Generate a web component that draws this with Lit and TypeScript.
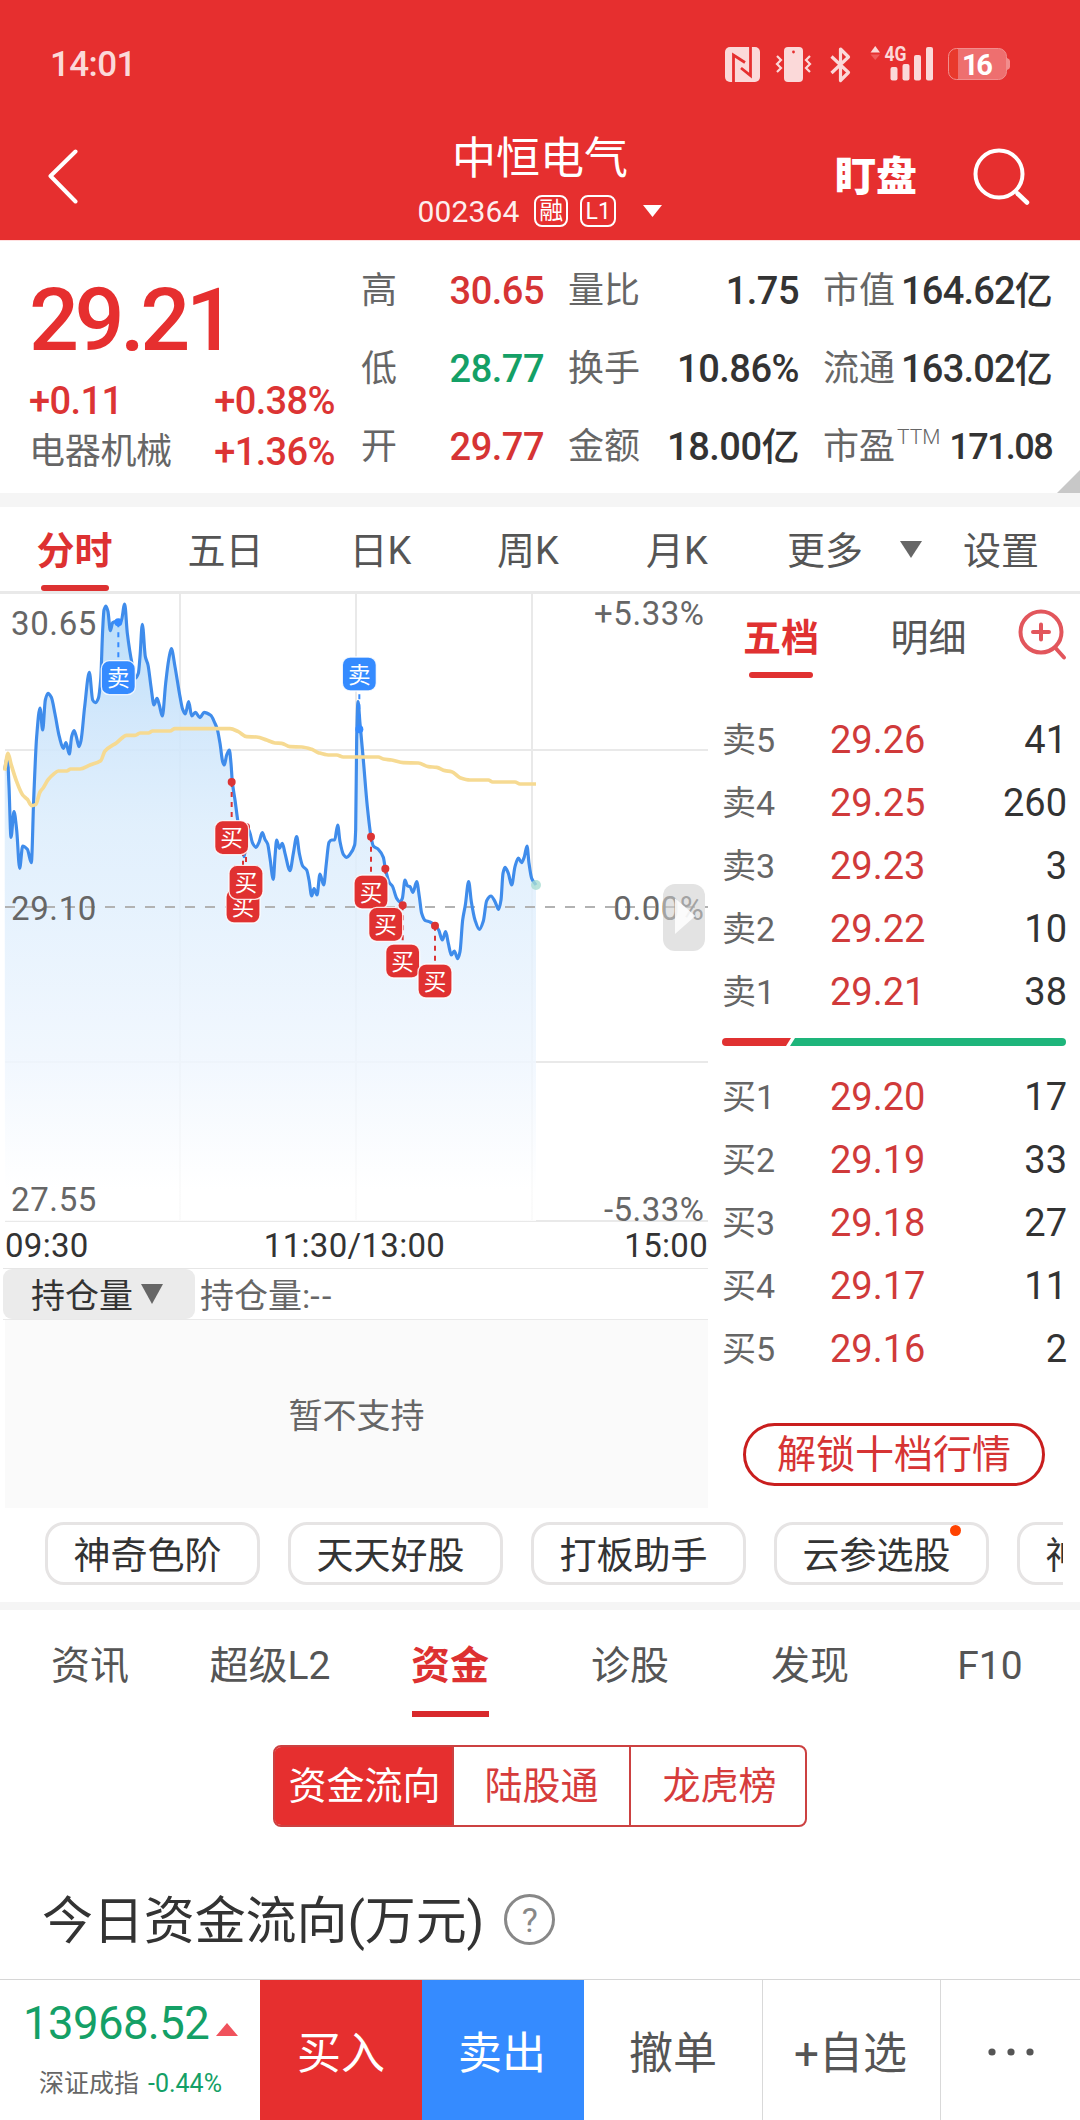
import { LitElement, html, svg, css } from "lit";
import { customElement, property } from "lit/decorators.js";
import { classMap } from "lit/directives/class-map.js";

const RED = "#e62f2f";
const BLUE = "#358bff";

type Pt = [number, number];

/* Chart space: one unit is a third of a pixel. */
const PRICE: Pt[] = [
  [14, 540], [22, 500], [27, 590], [33, 742], [42, 665], [50, 720], [59, 835], [68, 768], [82, 778], [94, 818],
  [101, 630], [110, 440], [120, 354], [128, 420], [136, 330], [144, 310], [154, 322], [165, 372], [178, 440],
  [190, 475], [198, 458], [208, 492], [215, 440], [222, 422], [229, 440], [237, 470], [243, 452], [254, 350],
  [268, 247], [278, 330], [286, 338], [295, 325], [302, 270], [308, 120], [312, 60], [318, 48], [324, 65],
  [331, 122], [338, 98], [348, 95], [356, 98], [364, 92], [374, 42], [382, 130], [396, 220], [407, 264],
  [415, 250], [420, 200], [427, 103], [436, 200], [444, 225], [453, 290], [462, 345], [471, 325], [478, 345],
  [487, 378], [497, 280], [506, 210], [514, 176], [525, 230], [540, 320], [548, 358], [556, 372], [566, 335],
  [575, 378], [586, 367], [600, 383], [612, 367], [632, 376], [645, 400], [652, 418], [660, 460], [668, 515],
  [673, 525], [680, 495], [688, 480], [693, 520], [697, 576], [705, 630], [713, 690], [725, 760], [732, 800],
  [742, 712], [750, 730], [758, 760], [768, 772], [777, 757], [787, 728], [795, 748], [803, 762], [810, 805],
  [820, 868], [825, 800], [830, 750], [838, 775], [847, 760], [855, 790], [870, 842], [880, 790], [890, 740],
  [898, 790], [908, 828], [920, 840], [927, 870], [935, 918], [942, 896], [951, 915], [960, 852], [971, 885],
  [979, 820], [987, 757], [995, 750], [1004, 750], [1013, 705], [1020, 755], [1030, 793], [1040, 802],
  [1050, 793], [1064, 765], [1067, 720], [1070, 450], [1074, 335], [1080, 400], [1090, 510], [1102, 650],
  [1113, 740], [1120, 768], [1135, 778], [1150, 802], [1156, 836], [1168, 878], [1177, 888], [1190, 925],
  [1200, 936], [1207, 925], [1215, 870], [1222, 887], [1230, 890], [1239, 907], [1250, 875], [1258, 920],
  [1265, 970], [1275, 991], [1290, 996], [1305, 1006], [1316, 1020], [1327, 1050], [1337, 1025], [1345, 1060],
  [1354, 1095], [1363, 1083], [1373, 1106], [1380, 1085], [1388, 990], [1396, 945], [1406, 875], [1414, 935],
  [1425, 990], [1438, 1018], [1450, 993], [1460, 932], [1473, 918], [1485, 935], [1496, 958], [1503, 930],
  [1509, 850], [1515, 832], [1525, 850], [1535, 885], [1545, 830], [1555, 804], [1565, 818], [1573, 800],
  [1581, 768], [1587, 820], [1595, 865], [1608, 885],
];

const AVERAGE: Pt[] = [
  [14, 542], [24, 490], [33, 522], [50, 575], [68, 615], [82, 628], [95, 647], [107, 644], [120, 606], [130, 593],
  [145, 568], [160, 553], [175, 543], [200, 543], [212, 537], [240, 537], [270, 525], [302, 512], [315, 483],
  [350, 458], [380, 436], [405, 436], [420, 429], [445, 429], [458, 423], [510, 423], [525, 416], [690, 416],
  [715, 425], [740, 440], [770, 441], [800, 450], [825, 459], [845, 460], [870, 470], [905, 471], [935, 478],
  [955, 488], [985, 495], [1010, 495], [1030, 501], [1135, 501], [1150, 507], [1175, 510], [1210, 518],
  [1255, 519], [1285, 530], [1310, 532], [1335, 542], [1355, 545], [1380, 563], [1410, 570], [1465, 570],
  [1478, 576], [1545, 576], [1560, 582], [1608, 582],
];

/** Cubic path through the points, flat at each local peak and trough. */
function smooth(points: Pt[]): string {
  const slope = points.slice(1).map((p, i) => (p[1] - points[i][1]) / (p[0] - points[i][0]));
  const tangent = points.map((_, i) => {
    if (i === 0) return slope[0];
    if (i === points.length - 1) return slope[i - 1];
    const a = slope[i - 1];
    const b = slope[i];
    return a * b <= 0 ? 0 : (2 * a * b) / (a + b);
  });
  let d = `M${points[0][0]} ${points[0][1]}`;
  for (let i = 1; i < points.length; i++) {
    const [x0, y0] = points[i - 1];
    const [x1, y1] = points[i];
    const h = (x1 - x0) / 3;
    d += `C${x0 + h} ${(y0 + tangent[i - 1] * h).toFixed(1)} ${x1 - h} ${(y1 - tangent[i] * h).toFixed(1)} ${x1} ${y1}`;
  }
  return d;
}

interface Trade { side: "买" | "卖"; x: number; y: number; dotX: number; dotY: number; }

const TRADES: Trade[] = [
  { side: "卖", x: 355, y: 263, dotX: 355, dotY: 97 },
  { side: "买", x: 729, y: 948, dotX: 729, dotY: 782 },
  { side: "买", x: 738, y: 877, dotX: 738, dotY: 711 },
  { side: "买", x: 695, y: 743, dotX: 695, dotY: 576 },
  { side: "卖", x: 1078, y: 252, dotX: 1078, dotY: 418 },
  { side: "买", x: 1113, y: 906, dotX: 1113, dotY: 740 },
  { side: "买", x: 1157, y: 1003, dotX: 1156, dotY: 836 },
  { side: "买", x: 1208, y: 1113, dotX: 1208, dotY: 946 },
  { side: "买", x: 1305, y: 1173, dotX: 1305, dotY: 1007 },
];

const base = css`
  :host {
    display: block;
    box-sizing: border-box;
    font-family: Roboto, "Noto Sans CJK SC", sans-serif;
    line-height: 1;
  }
  *, *::before, *::after { box-sizing: border-box; }
  svg { display: block; flex: none; }
`;

@customElement("status-bar")
export class StatusBar extends LitElement {
  static styles = [base, css`
    .bar { display: flex; align-items: center; height: 96px; padding: 32px 69px 0 50px; color: #fbd9d9; }
    .time { flex: 1; font-size: 35px; font-weight: 500; letter-spacing: -0.6px; padding-top: 1px; }
    .g { font: 700 20px Roboto, sans-serif; }
    .level { font: 700 29px Roboto, sans-serif; }
  `];
  render() {
    return html`<div class="bar">
      <span class="time">14:01</span>
      <svg width="287" height="38" viewBox="724 45 287 38">
        <rect x="725" y="47" width="35" height="35" rx="5" fill="#fbd9d9" />
        <path d="M733.5 82V55L745 62.500M750.500 47V75.500L741 68" fill="none" stroke=${RED} stroke-width="2.800" />
        <rect x="784" y="47" width="19" height="35" rx="4" fill="#fbd9d9" />
        <circle cx="793.500" cy="52" r="1.400" fill=${RED} />
        <path d="M777 56l4 4-4 4 4 4-4 4M810 56l-4 4 4 4-4 4 4 4" fill="none" stroke="#fbd9d9" stroke-width="2.200" />
        <path d="M831.500 56.500l17 16-8 8V49l8 8-17 16" fill="none" stroke="#fbd9d9" stroke-width="3.200" stroke-linejoin="round" />
        <path d="M870.500 52.500h9.500l-4.750-6.500z" fill="#fbd9d9" />
        <path d="M870.500 54.500h9.500l-4.750 5.500z" fill="#f05a5a" />
        <text class="g" x="884.500" y="60.500" textLength="22" lengthAdjust="spacingAndGlyphs" fill="#fbd9d9">4G</text>
        <g fill="#fbd9d9">
          <rect x="890.500" y="67" width="7" height="13.500" rx="2" />
          <rect x="902.500" y="64" width="7" height="16.500" rx="2" />
          <rect x="914" y="55" width="7" height="25.500" rx="2" />
          <rect x="926" y="47" width="7" height="33.500" rx="2" />
        </g>
        <rect x="948.500" y="48.500" width="58" height="31" rx="8" fill="#ee6f6f" />
        <path d="M958 48.500h-2a7.500 7.500 0 0 0-7.500 7.500v16a7.500 7.500 0 0 0 7.500 7.500h2z" fill="#e8392c" />
        <rect x="948.500" y="48.500" width="58" height="31" rx="8" fill="none" stroke="#f28d8d" />
        <path d="M1007 58q3 1 3 3v6q0 2-3 3z" fill="#f28d8d" />
        <text class="level" x="962" y="75" textLength="31" fill="#fff">16</text>
      </svg>
    </div>`;
  }
}

@customElement("title-bar")
export class TitleBar extends LitElement {
  static styles = [base, css`
    .bar {
      display: grid; grid-template-columns: 360px 360px 1fr; align-items: start;
      height: 144px; padding-top: 37px; color: #fff;
    }
    .back { padding: 16px 0 0 47px; }
    .mid { display: flex; flex-direction: column; align-items: center; padding-top: 3px; }
    .name { font-size: 44px; line-height: 46px; }
    .sub { display: flex; align-items: center; height: 34px; margin-top: 12px; font-size: 30px; letter-spacing: 0.1px; }
    .code { opacity: 0.92; margin-right: 15px; padding-top: 1px; }
    .tag {
      display: flex; align-items: center; justify-content: center; height: 32px; min-width: 34px;
      border: 2px solid #fff; border-radius: 8px; font-size: 24px; margin-right: 12px;
    }
    .l1 { width: 36px; margin-right: 27px; font-size: 23px; padding-top: 1px; }
    .right { display: flex; align-items: center; justify-content: flex-end; gap: 55px; padding: 15px 50px 0 0; }
    .watch { font-size: 41px; font-weight: 900; padding-right: 1px; padding-top: 1px; }
  `];
  render() {
    return html`<div class="bar">
      <div class="back">
        <svg width="32" height="56" viewBox="0 0 32 56"><path d="M28.500 2.500L3.500 27l25 25.500" fill="none" stroke="#fff" stroke-width="4" stroke-linecap="round" stroke-linejoin="round" /></svg>
      </div>
      <div class="mid">
        <div class="name">中恒电气</div>
        <div class="sub">
          <span class="code">002364</span><span class="tag">融</span><span class="tag l1">L1</span>
          <svg width="19" height="12" viewBox="0 0 19 12"><path d="M0 0h19l-9.500 12z" fill="#fff" /></svg>
        </div>
      </div>
      <div class="right">
        <span class="watch">盯盘</span>
        <svg width="57" height="57" viewBox="0 0 57 57"><circle cx="26" cy="26" r="23.500" fill="none" stroke="#fff" stroke-width="4" /><path d="M44.500 45.500l9.500 9" stroke="#fff" stroke-width="4.500" stroke-linecap="round" /></svg>
      </div>
    </div>`;
  }
}

@customElement("quote-panel")
export class QuotePanel extends LitElement {
  static styles = [base, css`
    .panel {
      position: relative; display: grid; grid-template-columns: 361px 183px 255px 1fr;
      height: 253px; border-top: 1px solid #ffe0e0; background: #fff; color: #333;
    }
    .lead { padding: 34px 26px 0 29px; color: #dc3434; }
    .price { font-size: 88px; line-height: 90px; font-weight: 500; color: #e62f2f; letter-spacing: -4.4px; }
    .pair { display: flex; justify-content: space-between; align-items: center; height: 51px; font-size: 38px; font-weight: 500; letter-spacing: -0.6px; }
    .first { margin-top: 10px; }
    .sector { font-size: 36px; font-weight: 400; color: #666; letter-spacing: -0.3px; }
    .col { display: flex; flex-direction: column; padding-top: 11px; }
    .cell { display: flex; justify-content: space-between; align-items: center; height: 78px; font-size: 38px; font-weight: 500; letter-spacing: -0.5px; }
    .label { font-size: 36px; font-weight: 400; color: #666; letter-spacing: 0; white-space: nowrap; }
    .b { padding-left: 24px; }
    .c { padding: 11px 28px 0 24px; }
    .c .cell { letter-spacing: -0.8px; }
    .up { color: #d63434; }
    .down { color: #14a066; }
    .pe { display: flex; }
    .sup { font-size: 21px; font-weight: 300; margin: -2px 0 0 2px; }
    .c .tight { font-size: 36px; letter-spacing: -1.6px; }
    .corner { position: absolute; right: 0; bottom: 0; width: 23px; height: 23px; background: #c8c8c8; clip-path: polygon(100% 0, 100% 100%, 0 100%); }
  `];
  private cell(label: unknown, value: string, tone = "") {
    return html`<div class="cell"><span class="label">${label}</span><span class=${tone}>${value}</span></div>`;
  }
  render() {
    return html`<div class="panel">
      <div class="lead">
        <div class="price">29.21</div>
        <div class="pair first"><span>+0.11</span><span>+0.38%</span></div>
        <div class="pair"><span class="sector">电器机械</span><span>+1.36%</span></div>
      </div>
      <div class="col">${this.cell("高", "30.65", "up")}${this.cell("低", "28.77", "down")}${this.cell("开", "29.77", "up")}</div>
      <div class="col b">${this.cell("量比", "1.75")}${this.cell("换手", "10.86%")}${this.cell("金额", "18.00亿")}</div>
      <div class="col c">
        ${this.cell("市值", "164.62亿")}${this.cell("流通", "163.02亿")}
        ${this.cell(html`<span class="pe">市盈<span class="sup">TTM</span></span>`, "171.08", "tight")}
      </div>
      <div class="corner"></div>
    </div>`;
  }
}

@customElement("period-tabs")
export class PeriodTabs extends LitElement {
  static styles = [base, css`
    .tabs {
      display: grid; grid-template-columns: 149px 153px 157px 138px 160px 136px 34px 1fr;
      height: 87px; border-bottom: 3px solid #e9e9e9; background: #fff; color: #555; font-size: 38px;
    }
    .tab { display: flex; flex-direction: column; align-items: center; justify-content: flex-end; gap: 15px; }
    .tab::after { content: ""; width: 68px; height: 6px; border-radius: 3px; }
    .on { color: #dd3131; font-weight: 700; }
    .on::after { background: #dd3131; }
    .arrow { display: flex; align-items: center; padding: 0 0 0 7px; }
    .set { padding-right: 5px; }
  `];
  render() {
    return html`<div class="tabs">
      ${["分时", "五日", "日K", "周K", "月K", "更多"].map((t, i) => html`<div class=${classMap({ tab: true, on: i === 0 })}>${t}</div>`)}
      <div class="arrow"><svg width="22" height="17" viewBox="0 0 22 17"><path d="M0 0h22l-11 17z" fill="#666" /></svg></div>
      <div class="tab set">设置</div>
    </div>`;
  }
}

@customElement("minute-chart")
export class MinuteChart extends LitElement {
  static styles = [base, css`
    .t { font-family: Roboto, sans-serif; font-size: 99px; fill: #666; }
    .mark { font-family: "Noto Sans CJK SC", sans-serif; font-size: 68px; fill: #fff; }
    .times { display: flex; justify-content: space-between; align-items: center; height: 44px; padding: 0 0 1px 5px; font-size: 33px; color: #333; letter-spacing: 0.3px; }
    .mid { padding-right: 4px; }
    .legend { display: flex; align-items: stretch; height: 52px; margin: 0 0 0 3px; border-top: 1px solid #e6e6e6; border-bottom: 1px solid #e9e9e9; font-size: 34px; color: #666; }
    .pick { display: flex; align-items: center; gap: 8px; width: 192px; padding: 3px 0 0 28px; margin-right: 5px; border-radius: 9px; background: #ebebeb; color: #333; }
    .pick svg { margin-top: -4px; }
    .hold { display: flex; align-items: center; padding-top: 3px; }
    .dash { letter-spacing: 2.4px; }
    .empty { display: flex; align-items: center; justify-content: center; height: 188px; margin-left: 5px; padding-top: 3px; background: #fafafa; color: #666; font-size: 34px; }
  `];
  private link(t: Trade) {
    const edge = t.y > t.dotY ? t.y - 54 : t.y + 60;
    const color = t.side === "买" ? "#dc3434" : BLUE;
    return svg`<path d="M${t.dotX} ${t.dotY}V${edge}" stroke=${color} stroke-width="6" stroke-dasharray="15 15" />
      <circle cx=${t.dotX} cy=${t.dotY} r="12" fill=${color} />`;
  }
  private badge(t: Trade) {
    return svg`<rect x=${t.x - 51} y=${t.y - 51} width="102" height="102" rx="24" fill=${t.side === "买" ? "#e03131" : BLUE} stroke="#fff" stroke-opacity="0.85" stroke-width="4" />
      <text class="mark" text-anchor="middle" x=${t.x} y=${t.y + 26}>${t.side}</text>`;
  }
  render() {
    const line = smooth(PRICE);
    return html`
      <svg width="708" height="630" viewBox="0 12 2124 1890">
        <defs>
          <linearGradient id="fill" gradientUnits="userSpaceOnUse" x1="0" y1="40" x2="0" y2="1893">
            <stop offset="0" stop-color="#b2daf9" stop-opacity="0.92" />
            <stop offset="0.18" stop-color="#cde5fb" stop-opacity="0.9" />
            <stop offset="0.36" stop-color="#dcedfc" stop-opacity="0.85" />
            <stop offset="0.5" stop-color="#e2f0fd" stop-opacity="0.85" />
            <stop offset="0.74" stop-color="#eff6fe" stop-opacity="0.85" />
            <stop offset="0.95" stop-color="#ffffff" stop-opacity="0.8" />
          </linearGradient>
        </defs>
        <path d="M540 12V1893M1068 12V1893M1596 12V1893M15 480H2124M15 1416H2124M15 1893H2124" stroke="#e9e9e9" stroke-width="6" />
        <path d="${line}V1893H15Z" fill="url(#fill)" />
        <path d="M15 951H2124" stroke="#b2b2b2" stroke-width="6" stroke-dasharray="30 30" />
        <path d=${line} fill="none" stroke="#3f8ceb" stroke-width="9.500" stroke-linejoin="round" />
        <path d=${smooth(AVERAGE)} fill="none" stroke="#f6da92" stroke-width="11" stroke-linejoin="round" />
        <circle cx="1608" cy="885" r="15" fill="#a9dcd2" fill-opacity="0.8" />
        ${TRADES.map((t) => this.link(t))}
        ${TRADES.map((t) => this.badge(t))}
        <text class="t" x="33" y="134" textLength="256">30.65</text>
        <text class="t" x="33" y="990" textLength="256">29.10</text>
        <text class="t" x="33" y="1863" textLength="256">27.55</text>
        <text class="t" x="1782" y="104" textLength="330">+5.33%</text>
        <text class="t" x="1840" y="990" textLength="272">0.00%</text>
        <text class="t" x="1812" y="1892" textLength="300">-5.33%</text>
        <rect x="1989" y="882" width="126" height="201" rx="36" fill="#cfcfcf" fill-opacity="0.58" />
        <path d="M2025 925L2086 978L2025 1032Z" fill="#fff" fill-opacity="0.85" />
      </svg>
      <div class="times"><span>09:30</span><span class="mid">11:30/13:00</span><span>15:00</span></div>
      <div class="legend">
        <div class="pick">持仓量<svg width="22" height="20" viewBox="0 0 22 20"><path d="M0 0h22l-11 20z" fill="#666" /></svg></div>
        <div class="hold">持仓量:<span class="dash">--</span></div>
      </div>
      <div class="empty">暂不支持</div>`;
  }
}

@customElement("order-book")
export class OrderBook extends LitElement {
  static styles = [base, css`
    :host { padding: 12px 14px 0 14px; }
    .tabs { display: grid; grid-template-columns: 118px 177px 1fr; height: 75px; font-size: 38px; color: #555; margin-bottom: 27px; }
    .tab { display: flex; flex-direction: column; align-items: center; padding-top: 13px; gap: 15px; }
    .tab::after { content: ""; width: 64px; height: 6px; border-radius: 3px; }
    .on { color: #e03131; font-weight: 700; }
    .on::after { background: #e03131; }
    .more { display: flex; justify-content: flex-end; padding: 2px 2px 0 0; }
    .row { display: grid; grid-template-columns: 108px 1fr 100px; align-items: center; height: 63px; font-size: 38px; padding-right: 2px; }
    .side { font-size: 34px; color: #666; padding-top: 1px; }
    .price { color: #d03a3a; }
    .qty { text-align: right; color: #333; }
    .ratio { margin: 15px 0 19px; }
    .unlock {
      display: flex; align-items: center; justify-content: center; width: 302px; height: 63px; margin: 43px auto 0 21px; padding-top: 2px;
      border: 3px solid #c91e1e; border-radius: 32px; color: #d63434; font-size: 39px;
    }
  `];
  @property({ attribute: false }) asks: [string, string, string][] = [
    ["卖5", "29.26", "41"], ["卖4", "29.25", "260"], ["卖3", "29.23", "3"], ["卖2", "29.22", "10"], ["卖1", "29.21", "38"],
  ];
  @property({ attribute: false }) bids: [string, string, string][] = [
    ["买1", "29.20", "17"], ["买2", "29.19", "33"], ["买3", "29.18", "27"], ["买4", "29.17", "11"], ["买5", "29.16", "2"],
  ];
  private row([side, price, qty]: [string, string, string]) {
    return html`<div class="row"><span class="side">${side}</span><span class="price">${price}</span><span class="qty">${qty}</span></div>`;
  }
  render() {
    return html`
      <div class="tabs">
        <div class="tab on">五档</div>
        <div class="tab">明细</div>
        <div class="more">
          <svg width="50" height="54" viewBox="0 0 50 54"><g fill="none" stroke="#e2565c" stroke-width="4" stroke-linecap="round"><circle cx="24" cy="24" r="20.500" /><path d="M24 16.500v15M16 24h16M38.500 40l8.500 9.500" /></g></svg>
        </div>
      </div>
      ${this.asks.map((r) => this.row(r))}
      <svg class="ratio" width="344" height="8" viewBox="0 0 344 8">
        <path d="M4 0H69L64 8H4A4 4 0 0 1 4 0Z" fill="#e03131" /><path d="M73 0H340A4 4 0 0 1 340 8H68Z" fill="#1eb57b" />
      </svg>
      ${this.bids.map((r) => this.row(r))}
      <div class="unlock">解锁十档行情</div>`;
  }
}

@customElement("tool-chips")
export class ToolChips extends LitElement {
  static styles = [base, css`
    .strip { display: flex; gap: 28px; height: 94px; margin-right: 17px; padding: 14px 0 0 45px; overflow: hidden; }
    .chip {
      position: relative; flex: none; display: flex; align-items: center; justify-content: center; width: 215px; height: 63px;
      padding: 5px 10px 0 0; border: 3px solid #e6e4e4; border-radius: 19px; font-size: 37px; color: #333;
    }
    .dot { position: absolute; right: 25px; top: 0; width: 11px; height: 11px; border-radius: 50%; background: #ff4200; }
  `];
  render() {
    return html`<div class="strip">
      ${["神奇色阶", "天天好股", "打板助手", "云参选股", "神奇电波"].map((t, i) => html`<div class="chip">${t}${i === 3 ? html`<i class="dot"></i>` : null}</div>`)}
    </div>`;
  }
}

@customElement("fund-section")
export class FundSection extends LitElement {
  static styles = [base, css`
    :host { border-top: 8px solid #f5f5f5; }
    .tabs { display: grid; grid-template-columns: repeat(6, 180px); height: 107px; font-size: 39px; color: #555; }
    .tab { display: flex; flex-direction: column; align-items: center; justify-content: flex-end; gap: 25px; }
    .tab::after { content: ""; width: 77px; height: 6px; }
    .on { color: #dd3131; font-weight: 700; }
    .on::after { background: #d8292c; }
    .segments { display: grid; grid-template-columns: 177px 177px 1fr; width: 534px; height: 82px; margin: 28px auto 0; border: 2px solid #cc4141; border-radius: 8px; overflow: hidden; color: #d63c3c; font-size: 38px; }
    .seg { display: flex; align-items: center; justify-content: center; border-left: 2px solid #cc4141; }
    .seg:first-child { background: #e62f2f; color: #fff; border-left-color: #e62f2f; }
    .seg:last-child { padding-left: 3px; }
    .heading { display: flex; align-items: center; gap: 21px; height: 152px; padding: 36px 0 0 42px; font-size: 51px; color: #333; letter-spacing: -0.1px; }
    .text { padding-top: 1px; }
    .q { display: flex; align-items: center; justify-content: center; width: 51px; height: 51px; border: 3px solid #888; border-radius: 50%; font-size: 34px; color: #888; margin: -3px 0 0 -1px; }
  `];
  render() {
    return html`
      <div class="tabs">${["资讯", "超级L2", "资金", "诊股", "发现", "F10"].map((t, i) => html`<div class=${classMap({ tab: true, on: i === 2 })}>${t}</div>`)}</div>
      <div class="segments">${["资金流向", "陆股通", "龙虎榜"].map((t) => html`<div class="seg">${t}</div>`)}</div>
      <div class="heading"><span class="text">今日资金流向(万元)</span><span class="q">?</span></div>`;
  }
}

@customElement("trade-bar")
export class TradeBar extends LitElement {
  static styles = [base, css`
    .bar { display: grid; grid-template-columns: 260px 162px 162px 178px 178px 1fr; height: 141px; border-top: 1px solid #d6d6d6; background: #fff; font-size: 44px; color: #555; }
    .index { padding: 21px 0 0 23px; color: #14a066; }
    .value { display: flex; align-items: center; gap: 7px; height: 45px; font-size: 45.5px; letter-spacing: -0.6px; }
    .value svg { margin-top: 12px; }
    .note { display: flex; align-items: center; gap: 9px; height: 40px; margin-top: 17px; padding-left: 16px; font-size: 25px; }
    .name { color: #666; }
    .act { display: flex; align-items: center; justify-content: center; padding-top: 7px; }
    .buy { background: #e62f2f; color: #fff; }
    .sell { background: #358bff; color: #fff; padding-right: 2px; }
    .line { border-left: 1px solid #d9d9d9; }
    .add { padding-right: 2px; }
    .dots { padding-top: 4px; }
  `];
  render() {
    return html`<div class="bar">
      <div class="index">
        <div class="value">13968.52<svg width="22" height="13" viewBox="0 0 22 13"><path d="M0 13h22l-11-13z" fill="#f0525c" /></svg></div>
        <div class="note"><span class="name">深证成指</span><span>-0.44%</span></div>
      </div>
      <div class="act buy">买入</div>
      <div class="act sell">卖出</div>
      <div class="act">撤单</div>
      <div class="act add line">+自选</div>
      <div class="act line dots"><svg width="46" height="8" viewBox="0 0 46 8"><g fill="#555"><circle cx="4" cy="4" r="3.600" /><circle cx="23" cy="4" r="3.600" /><circle cx="42" cy="4" r="3.600" /></g></svg></div>
    </div>`;
  }
}

@customElement("app-root")
export class AppRoot extends LitElement {
  static styles = [base, css`
    :host { width: 1080px; height: 2120px; overflow: hidden; background: #fff; }
    .page { display: flex; flex-direction: column; height: 2120px; }
    .top { background: #e62f2f; height: 240px; flex: none; }
    .band { height: 14px; flex: none; background: #f5f5f5; }
    .market { display: grid; grid-template-columns: 708px 1fr; height: 914px; flex: none; }
    .foot { margin-top: auto; }
  `];
  render() {
    return html`<div class="page">
      <div class="top"><status-bar></status-bar><title-bar></title-bar></div>
      <quote-panel></quote-panel>
      <div class="band"></div>
      <period-tabs></period-tabs>
      <div class="market"><minute-chart></minute-chart><order-book></order-book></div>
      <tool-chips></tool-chips>
      <fund-section></fund-section>
      <trade-bar class="foot"></trade-bar>
    </div>`;
  }
}
